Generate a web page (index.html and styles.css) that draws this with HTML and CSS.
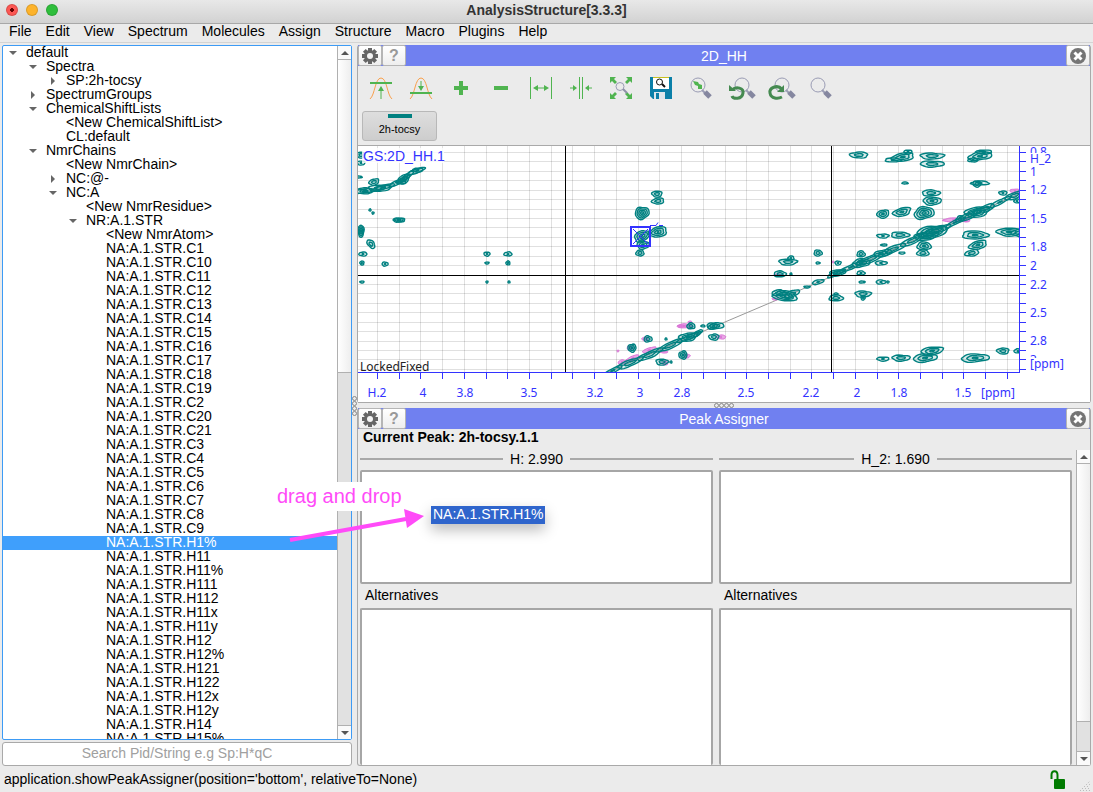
FILE: index.html
```
<!DOCTYPE html>
<html lang="en">
<head>
    <meta charset="UTF-8">
    <title>AnalysisStructure[3.3.3]</title>
    <link rel="stylesheet" href="styles.css">
</head>
<body>
    <header class="titlebar">
        <div class="lights"><i class="red"></i><i class="yellow"></i><i class="green"></i></div>
        <h1>AnalysisStructure[3.3.3]</h1>
    </header>
    <nav class="menubar">
        <button>File</button><button>Edit</button><button>View</button><button>Spectrum</button><button>Molecules</button><button>Assign</button><button>Structure</button><button>Macro</button><button>Plugins</button><button>Help</button>
    </nav>

    <main class="main">
        <aside class="sidebar">
            <div class="tree">
                <ul id="tree"></ul>
                <div class="scrollbar">
                    <i class="up"></i>
                    <div class="track"><div class="thumb thumb-tree"></div></div>
                    <i class="down"></i>
                </div>
            </div>
            <input class="search" type="text" aria-label="Search" placeholder="Search Pid/String e.g Sp:H*qC">
        </aside>

        <div class="vsplit"><i></i><i></i><i></i><i></i></div>

        <div class="docks">
            <section class="dock">
                <div class="dock-head">
                    <button class="hbtn" aria-label="Settings"><svg width="18" height="18" viewBox="0 0 18 18"><use href="#gear"/></svg></button>
                    <button class="hbtn help">?</button>
                    <h2>2D_HH</h2>
                    <button class="hbtn" aria-label="Close"><svg width="18" height="18" viewBox="0 0 18 18"><use href="#close"/></svg></button>
                </div>
                <div class="toolbar">
                    <button aria-label="Raise contour level"><svg viewBox="0 0 22 22"><path class="peak" d="M0 22C5 18 5 1 11 1s6 17 11 21"/><path class="g2" d="M0 6h22"/><path class="g1" d="M11 22V11"/><path class="gf" d="M8 14l3-5 3 5z"/></svg></button>
                    <button aria-label="Lower contour level"><svg viewBox="0 0 22 22"><path class="peak" d="M0 22C5 18 5 1 11 1s6 17 11 21"/><path class="g2" d="M0 16h22"/><path class="g1" d="M11 4v7"/><path class="gf" d="M8 9l3 5 3-5z"/></svg></button>
                    <button aria-label="Add contour"><svg viewBox="0 0 22 22"><path class="g3" d="M4 11h14M11 4v14"/></svg></button>
                    <button aria-label="Remove contour"><svg viewBox="0 0 22 22"><path class="g3" d="M4 11h14"/></svg></button>
                    <button aria-label="Expand strip"><svg viewBox="0 0 22 22"><path class="g1" d="M.5 0v22M21.500 0v22M5 11h12"/><path class="gf" d="M3 11l5-3v6zM19 11l-5-3v6z"/></svg></button>
                    <button aria-label="Shrink strip"><svg viewBox="0 0 22 22"><path class="g1" d="M9.500 0v22M12.500 0v22M0 11h4M18 11h4"/><path class="gf" d="M7 11L3 8v6zM15 11l4-3v6z"/></svg></button>
                    <button aria-label="Zoom to full"><svg viewBox="0 0 22 22"><path class="gf" d="M0 0h6L4 2l3 3-2 2-3-3-2 2zM22 0h-6l2 2-3 3 2 2 3-3 2 2zM0 22h6l-2-2 3-3-2-2-3 3-2-2zM22 22h-6l2-2-3-3 2-2 3 3 2-2z"/><circle class="lens" cx="10" cy="9.500" r="4"/><path d="M13 12l4 4" stroke="#8e90a8" stroke-width="2"/></svg></button>
                    <button aria-label="Save zoom"><svg viewBox="0 0 22 22"><path d="M0 0h22v22H3L0 19z" fill="#0a7fa8"/><path d="M3 0h16v12H3z" fill="#fff"/><path d="M3 0h16v1H3z" fill="#c8c020"/><circle cx="9.500" cy="5" r="3" fill="none" stroke="#111"/><path d="M12 7l3 3" stroke="#111" stroke-width="2"/><path d="M4 15h14v7H4z" fill="#dde6ec"/><path d="M6 16h3v6H6zM15 15h3v7h-3z" fill="#0a7fa8"/></svg></button>
                    <button aria-label="Zoom to stored"><svg viewBox="0 0 22 22"><use href="#lens"/><path class="gf" d="M3 4l5 1 1 2 3 1v4H8V9L5 8z"/></svg></button>
                    <button aria-label="Previous zoom"><svg viewBox="0 0 22 22"><use href="#lens" x="4"/><path class="undo" d="M2 13c4-4 12-2 11 3-1 7-10 6-11 3"/><path d="M-1 8v6h7z" fill="#458a50"/></svg></button>
                    <button aria-label="Next zoom"><svg viewBox="0 0 22 22"><use href="#lens" x="4"/><path class="undo" d="M12 12C7 7-1 11 0 16c1 6 8 6 12 4"/><path d="M14 8v7H7z" fill="#458a50"/></svg></button>
                    <button aria-label="Zoom"><svg viewBox="0 0 22 22"><use href="#lens"/></svg></button>
                </div>
                <div class="spectra"><button class="spectrum">2h-tocsy</button></div>
                <div class="plot"><svg id="plot" viewBox="0 0 732 256"></svg></div>
            </section>

            <div class="hsplit"><i></i><i></i><i></i><i></i></div>

            <section class="dock assigner">
                <div class="dock-head">
                    <button class="hbtn" aria-label="Settings"><svg width="18" height="18" viewBox="0 0 18 18"><use href="#gear"/></svg></button>
                    <button class="hbtn help">?</button>
                    <h2>Peak Assigner</h2>
                    <button class="hbtn" aria-label="Close"><svg width="18" height="18" viewBox="0 0 18 18"><use href="#close"/></svg></button>
                </div>
                <p class="current">Current Peak: 2h-tocsy.1.1</p>
                <div class="assign-body">
                    <div class="axes">
                        <div class="axis-col">
                            <h3>H: 2.990</h3>
                            <div class="list"></div>
                            <h4>Alternatives</h4>
                            <div class="list rest"></div>
                        </div>
                        <div class="axis-col">
                            <h3>H_2: 1.690</h3>
                            <div class="list"></div>
                            <h4>Alternatives</h4>
                            <div class="list rest"></div>
                        </div>
                    </div>
                    <div class="scrollbar">
                        <i class="up"></i>
                        <div class="track"><div class="thumb thumb-assign"></div></div>
                        <i class="down"></i>
                    </div>
                </div>
            </section>
        </div>
    </main>

    <footer class="status">
        <span>application.showPeakAssigner(position='bottom', relativeTo=None)</span>
        <svg class="lock" width="16" height="20" viewBox="0 0 16 20"><path d="M1.500 9V5c0-5 6-5 6 0v4" fill="none" stroke="#007a00" stroke-width="2"/><rect x="4" y="9" width="11" height="10" rx="1" fill="#007a00"/></svg>
        <svg class="grip" width="12" height="12" viewBox="0 0 12 12"><path d="M1 11L11 1M4 11l7-7M7 11l4-4M10 11l1-1" stroke="#aaa" stroke-dasharray="1 2"/></svg>
    </footer>

    <!-- drag and drop hint -->
    <div class="hint">drag and drop</div>
    <svg class="arrow" width="140" height="40" viewBox="0 0 140 40"><path d="M4 32L120 11" stroke="#ff4bf8" stroke-width="4"/><path d="M138 8L118 1l3 19z" fill="#ff4bf8"/></svg>
    <div class="dragged">NA:A.1.STR.H1%</div>

    <svg class="defs" width="0" height="0">
        <defs>
            <g id="gear">
                <path d="M7 1h4v16H7zM1 7h16v4H1z" fill="#666"/>
                <path d="M7 1h4v16H7zM1 7h16v4H1z" fill="#666" transform="rotate(45 9 9)"/>
                <circle cx="9" cy="9" r="6" fill="#666"/>
                <circle cx="9" cy="9" r="3" fill="#f4f4f4"/>
            </g>
            <g id="close">
                <circle cx="9" cy="9" r="8" fill="#757575"/>
                <path d="M5.500 5.500l7 7M12.500 5.500l-7 7" stroke="#fff" stroke-width="3"/>
            </g>
            <g id="lens">
                <circle cx="8" cy="8" r="7" fill="none" stroke="#9a9cb4"/>
                <path d="M12 13l3 3" stroke="#9a9cb4" stroke-width="2"/>
                <path d="M15 15l5 5" stroke="#8587a0" stroke-width="5"/>
            </g>
        </defs>
    </svg>
    <script src="script.js"></script>
</body>
</html>
```
FILE: styles.css
```
*{margin: 0;padding: 0;box-sizing: border-box;}
body{position: relative;display: flex;flex-direction: column;height: 100vh;overflow: hidden;background: #ebebeb;color: #000;font: 14px/16px "Liberation Sans", Arial, sans-serif;}
button{border: 0;background: none;font: inherit;color: inherit;}
ul{list-style: none;}

.titlebar{position: relative;height: 24px;background: linear-gradient(#e8e8e8, #d2d2d2);border-bottom: 1px solid #a8a8a8;}
.titlebar h1{font-size: 14px;line-height: 20px;text-align: center;color: #333;}
.lights{position: absolute;left: 6px;top: 4px;display: flex;gap: 8px;}
.lights i{width: 12px;height: 12px;border-radius: 50%;border: 1px solid #0002;}
.lights .red{background: radial-gradient(circle, #600 2px, #fc5753 2px);}
.lights .yellow{background: #fdb32b;}
.lights .green{background: #2fbe3c;}

.menubar{display: flex;gap: 14px;height: 19px;padding: 0 9px;border-bottom: 1px solid #d4d4d4;}
.menubar button{line-height: 14px;height: 14px;}

.main{flex: 1;min-height: 0;display: grid;grid-template-columns: 350px 5px 1fr;padding: 2px 2px 0;}
.sidebar{display: flex;flex-direction: column;gap: 2px;min-height: 0;}
.tree{flex: 1;min-height: 0;display: flex;border: 1px solid #3d9bf5;border-radius: 2px;background: #fff;}
.tree ul{flex: 1;overflow: hidden;}
.tree li{display: flex;height: 14px;line-height: 12px;white-space: nowrap;}
.tree li::before{content: "";box-sizing: border-box;width: 8px;height: 0;margin: 5px 9px 0 0;}
.tree li.open::before{border: 4px solid transparent;border-top: 4px solid #666;border-bottom: 0;height: 4px;}
.tree li.closed::before{border: 4px solid transparent;border-left: 4px solid #666;border-right: 0;width: 4px;height: 8px;margin: 3px 11px 0 2px;}
.tree li.l0{padding-left: 6px;}
.tree li.l1{padding-left: 26px;}
.tree li.l2{padding-left: 46px;}
.tree li.l3{padding-left: 66px;}
.tree li.l4{padding-left: 86px;}
.tree li.selected{background: #3f9ffc;color: #fff;}

.scrollbar{width: 14px;display: flex;flex-direction: column;border-left: 1px solid #b0b0b0;background: #e1e1e1;}
.scrollbar > i{height: 13px;display: flex;align-items: center;justify-content: center;background: #fafafa;}
.scrollbar > i::before{content: "";border: 4px solid transparent;}
.scrollbar .up::before{border-bottom: 4px solid #555;border-top: 0;}
.scrollbar .down::before{border-top: 4px solid #555;border-bottom: 0;}
.track{flex: 1;border-top: 1px solid #b0b0b0;border-bottom: 1px solid #b0b0b0;}
.thumb{background: linear-gradient(90deg, #fff, #eee);border-bottom: 1px solid #b0b0b0;}
.thumb-tree{height: 47%;}
.thumb-assign{height: 90%;}

.search{height: 24px;padding-bottom: 2px;border: 1px solid #a9a9a9;border-radius: 3px;background: #fff;font: inherit;text-align: center;}
.search::placeholder{color: #a0a0a0;}

.vsplit,.hsplit{display: flex;align-items: center;justify-content: center;}
.vsplit{flex-direction: column;}
.vsplit i,.hsplit i{width: 5px;height: 5px;border: 1px solid #888;border-radius: 50%;}
.hsplit{height: 5px;}

.docks{display: flex;flex-direction: column;min-width: 0;min-height: 0;}
.dock{border-left: 1px solid #a9a9a9;border-right: 1px solid #a9a9a9;border-radius: 3px;}
.dock-head{display: flex;height: 21px;background: #7080f0;color: #fff;}
.dock-head h2{flex: 1;padding-right: 24px;font-size: 14px;font-weight: normal;line-height: 22px;text-align: center;}
.hbtn{width: 24px;height: 21px;border: 1px solid #b5b5b5;border-radius: 2px;background: linear-gradient(#fff, #eee);display: flex;align-items: center;justify-content: center;}
.help{color: #999;font-weight: bold;font-size: 16px;}
.toolbar{display: flex;height: 44px;padding-left: 3px;align-items: center;}
.toolbar button{width: 40px;height: 40px;display: flex;align-items: center;justify-content: center;}
.toolbar svg{width: 22px;height: 22px;overflow: visible;}
.peak{fill: none;stroke: #f9a04c;stroke-width: 1;}
.g1,.g2,.g3{fill: none;stroke: #50b450;stroke-width: 1;}
.g2{stroke-width: 2;}
.g3{stroke-width: 4;}
.gf{fill: #50b450;}
.lens{fill: none;stroke: #9a9cb4;}
.undo{fill: none;stroke: #458a50;stroke-width: 3;}
.spectra{height: 35px;padding: 1px 4px;}
.spectrum{display: flex;flex-direction: column;align-items: center;width: 75px;height: 30px;padding-top: 2px;border: 1px solid #b8b8b8;border-radius: 3px;background: linear-gradient(#dedede, #cdcdcd);font-size: 11px;line-height: 12px;}
.spectrum::before{content: "";width: 24px;height: 4px;margin-bottom: 5px;background: #008080;}

.plot{border-top: 1px solid #a9a9a9;border-bottom: 1px solid #a9a9a9;background: #fff;}
.plot svg{display: block;width: 100%;}
.grid{stroke: #000;stroke-opacity: .12;}
.axis{stroke: #3333ff;fill: none;}
.cross{stroke: #000;}
.teal{stroke: #008080;stroke-width: 1.4;fill: #008080;fill-opacity: .15;}
.pink{stroke: #da70d6;fill: #da70d6;fill-opacity: .6;}
.label{fill: #3333ff;font: 12px "Noto Sans", sans-serif;}
.mid{text-anchor: middle;}
.strip-id{fill: #3333ff;font: 14px "Liberation Sans", Arial, sans-serif;}
.lock-text{fill: #222;font: 12px "Noto Sans", sans-serif;}

.assigner{flex: 1;min-height: 0;display: flex;flex-direction: column;border-bottom: 1px solid #a9a9a9;}
.current{padding-left: 5px;height: 21px;line-height: 17px;font-weight: bold;}
.assign-body{flex: 1;min-height: 0;display: flex;gap: 4px;padding-left: 2px;}
.axes{flex: 1;min-width: 0;display: grid;grid-template-columns: 1fr 1fr;gap: 6px;}
.axis-col{display: flex;flex-direction: column;min-height: 0;}
.axis-col h3{display: flex;align-items: center;gap: 7px;height: 20px;padding-bottom: 2px;font-size: 14px;font-weight: normal;}
.axis-col h3::before,.axis-col h3::after{content: "";flex: 1;height: 2px;background: #a9a9a9;}
.list{height: 114px;border: 2px solid #a6a6a6;border-radius: 2px;background: #fff;}
.axis-col h4{height: 24px;line-height: 23px;padding-left: 5px;font-size: 14px;font-weight: normal;}
.rest{flex: 1;height: auto;border-bottom: 0;}

.status{display: flex;align-items: center;height: 26px;padding: 0 2px 0 4px;}
.status .lock{margin: 2px 13px 0 auto;}
.status .grip{align-self: flex-end;}

.hint{position: absolute;left: 277px;top: 482px;height: 29px;line-height: 29px;font-size: 20px;color: #ff4bf8;background: #fff;}
.arrow{position: absolute;left: 286px;top: 508px;}
.dragged{position: absolute;left: 431px;top: 506px;padding: 0 2px;height: 18px;line-height: 17px;background: #2f65cc;color: #fff;box-shadow: 0 6px 14px #0004;}
.defs{position: absolute;}
```
FILE: script.js
```
// project tree: [level, text, state]
var rows = [
    [0, 'default', 'open'], [1, 'Spectra', 'open'], [2, 'SP:2h-tocsy', 'closed'],
    [1, 'SpectrumGroups', 'closed'], [1, 'ChemicalShiftLists', 'open'],
    [2, '<New ChemicalShiftList>'], [2, 'CL:default'], [1, 'NmrChains', 'open'],
    [2, '<New NmrChain>'], [2, 'NC:@-', 'closed'], [2, 'NC:A', 'open'],
    [3, '<New NmrResidue>'], [3, 'NR:A.1.STR', 'open'], [4, '<New NmrAtom>']
];
var atoms = 'C1 C10 C11 C12 C13 C14 C15 C16 C17 C18 C19 C2 C20 C21 C3 C4 C5 C6 C7 C8 C9 H1% H11 H11% H111 H112 H11x H11y H12 H12% H121 H122 H12x H12y H14 H15%'.split(' ');
atoms.forEach(function (a) {
    rows.push([4, 'NA:A.1.STR.' + a, a == 'H1%' ? 'selected' : '']);
});
var tree = document.getElementById('tree');
rows.forEach(function (r) {
    var li = document.createElement('li');
    li.className = 'l' + r[0] + ' ' + (r[2] || '');
    li.textContent = r[1];
    tree.appendChild(li);
});

// contours: [cx, cy, rx, ry, angle]
var teal = [
    [501,9,9,3],[545,11,11,4,-8],[535,14,8,2],[550,6,4,2],[574,10,12,3],[574,18,12,3],[622,10,12,4,-8],[626,6,8,2],[615,14,5,2],
    [547,37,3,1],[622,37,9,2],[619,38,4,3],[573,47,9,3],[574,55,9,4],[645,47,4,2],[659,55,3,2],
    [525,68,6,4,-10],[544,66,9,4,-15],[566,67,10,6,-10],[619,66,12,5,-8],[602,73,4,3,-20],
    [525,90,6,2],[542,89,9,3],[574,86,15,6,-8],[568,90,12,4,-8],[617,89,13,4],[651,86,12,4],[664,87,10,4],
    [566,100,7,4],[620,99,9,4,-15],[526,99,3,1],[503,108,4,3],[525,107,9,3,-10],[544,107,3,1],[565,107,6,3],[614,107,7,3,-10],
    [503,117,9,4,-10],[523,117,6,2],[503,127,4,2],[504,136,3,1],[523,136,5,2],[530,136,1,1],[505,148,8,3],[505,152,2,2],
    [574,205,11,4,-8],[645,205,6,3],[660,205,4,2],[525,213,6,2],[543,212,9,3],[567,212,12,4,-5],[617,212,14,4,-3],
    [299,48,5,3],[300,55,6,3,-5],[284,67,7,6,-20],[284,90,8,5,-25],[300,86,9,5,-12],[285,99,6,4],[282,107,4,3],
    [430,116,9,3],[433,112,3,2],[460,107,4,3],[460,117,2,1],[480,117,3,2],[422,128,6,3],[433,128,1,1],[479,127,8,3,-8],
    [427,150,12,5,5],[421,147,7,3],[434,148,8,3,-25],[460,136,6,2,-15],[449,141,3,1],[478,152,7,3],[478,148,2,1],
    [358,180,8,3,-8],[354,180,5,3],[333,180,4,3],[345,180,2,1],[356,191,5,3],[330,191,9,4,-8],[340,187,5,2,-35],
    [290,193,4,3],[274,202,4,4],[325,209,4,4],[304,216,6,3],[313,216,1,1],[308,193,1,1],
    [6,45,8,3],[22,42,11,3],[16,36,5,3,-15],[46,33,6,4,-35],[43,36,5,2],[60,24,5,2],
    [3,9,4,3],[3,17,4,2],[1,31,3,1],[15,67,1,1],[12,64,1,1],[40,74,5,2],[42,74,5,2],[3,85,3,6],[13,98,5,3,50],
    [5,108,4,2],[27,118,3,2],[4,117,2,2],[4,136,2,1],[129,108,3,2],[150,108,4,2],[129,117,2,1],[150,117,2,2],[129,136,1,1],[151,136,1,1]
];
var pink = [
    [597,74,12,2],[608,74,4,2],[657,45,5,2],[327,180,8,2],[323,180,3,1],[332,176,2,1],[363,191,5,2],[287,193,3,2],[272,202,3,2],[329,210,3,2],[307,217,3,2],
    [291,204,7,2,-20],[275,212,7,2,-20],[264,216,4,2,-10],[306,206,4,1],[260,205,1,1],[417,153,3,1],[420,129,4,1],[475,116,1,1]
];
function ring(cls, b, k) {
    var d = '', n = 24, a = (b[4] || 0) * Math.PI / 180;
    for (var i = 0; i < n; i++) {
        var t = i / n * Math.PI * 2;
        var w = k * (1 + .08 * Math.sin(3 * t + b[0]) + .05 * Math.sin(5 * t + b[1]));
        var x = b[2] * w * Math.cos(t), y = b[3] * w * Math.sin(t);
        d += (i ? 'L' : 'M') + (b[0] + x * Math.cos(a) - y * Math.sin(a)).toFixed(1) + ' ' + (b[1] + x * Math.sin(a) + y * Math.cos(a)).toFixed(1);
    }
    return '<path class="' + cls + '" d="' + d + 'Z"/>';
}
function contours(cls, list) {
    return list.map(function (b) {
        var s = '';
        for (var r = b[3]; r > 0; r -= 1.6) s += ring(cls, b, r / b[3]);
        return s;
    }).join('');
}
// the diagonal ridge, drawn as short overlapping contours
function ridge(pts) {
    var s = '';
    for (var i = 1; i < pts.length; i++) {
        var p = pts[i - 1], q = pts[i], dx = q[0] - p[0], dy = q[1] - p[1];
        s += contours('teal', [[(p[0] + q[0]) / 2, (p[1] + q[1]) / 2, Math.hypot(dx, dy) / 2 + 3, q[2], Math.atan2(dy, dx) * 180 / Math.PI]]);
    }
    return s;
}
function line(cls, x1, y1, x2, y2) {
    return '<path class="' + cls + '" d="M' + x1 + ' ' + y1 + 'L' + x2 + ' ' + y2 + '"/>';
}
function text(cls, x, y, s) {
    return '<text class="' + cls + '" x="' + x + '" y="' + y + '">' + s + '</text>';
}

var svg = '<clipPath id="area"><rect width="661" height="226"/></clipPath>';
var i, p;
for (i = 0; i < 30; i++) {
    p = Math.round(19 + i * 21.72) + .5;
    svg += line('grid', p, 0, p, 226) + line('axis', p, 227, p, 233);
}
for (i = 0; i < 24; i++) {
    p = Math.round(6 + i * 9.43) + .5;
    svg += line('grid', 0, p, 661, p) + line('axis', 662, p, 668, p);
}
svg += '<g clip-path="url(#area)">';
svg += '<path d="M250 226L367 176L440 145L500 119L661 48" fill="none" stroke="#999"/>';
svg += contours('pink', pink);
svg += ridge([[248,228],[262,221,2],[282,213,3],[302,204,3],[322,195,3],[341,187,2]]);
svg += ridge([[472,130],[484,125,2],[502,117,2],[523,109,3],[545,99,3],[566,89,3],[590,80,3],[604,73,2],[619,66,3],[634,60,3],[650,52,2],[663,47,3]]);
svg += ridge([[-2,46],[16,44,2],[34,39,2],[46,33,2],[53,27,2],[64,23,2]]);
svg += contours('teal', teal) + '</g>';
svg += line('axis', 0, 226.5, 661, 226.5) + line('axis', 661.5, 0, 661.5, 227);
svg += line('cross', 207.5, 0, 207.5, 226) + line('cross', 473.5, 0, 473.5, 226) + line('cross', 0, 129.5, 661, 129.5);
// selected peak
svg += '<path class="axis" stroke-width="2" d="M273 81h19v19h-19z"/><path class="axis" d="M275 83l15 15M290 83l-15 15M292 79.500h6l2-3M301 79.500h4"/>';
svg += '<rect x="4" y="2" width="82" height="15" fill="#fff" fill-opacity=".8"/>' + text('strip-id', 5, 15, 'GS:2D_HH.1') + text('lock-text', 2, 225, 'LockedFixed');
[[19,'H.2'],[65,'4'],[107,'3.8'],[171,'3.5'],[237,'3.2'],[282,'3'],[324,'2.8'],[388,'2.5'],[453,'2.2'],[499,'2'],[541,'1.8'],[605,'1.5'],[640,'[ppm]']].forEach(function (l) {
    svg += text('label mid', l[0], 251, l[1]);
});
[[10,'0.8'],[30,'1'],[48,'1.2'],[77,'1.5'],[105,'1.8'],[124,'2'],[143,'2.2'],[171,'2.5'],[199,'2.8'],[218,'3']].forEach(function (l) {
    svg += text('label', 672, l[0], l[1]);
});
svg += '<rect x="671" y="7" width="22" height="12" fill="#fff"/>' + text('label', 672, 17, 'H_2');
svg += '<rect x="671" y="212" width="36" height="14" fill="#fff"/>' + text('label', 672, 222, '[ppm]');
document.getElementById('plot').innerHTML = svg;
```
